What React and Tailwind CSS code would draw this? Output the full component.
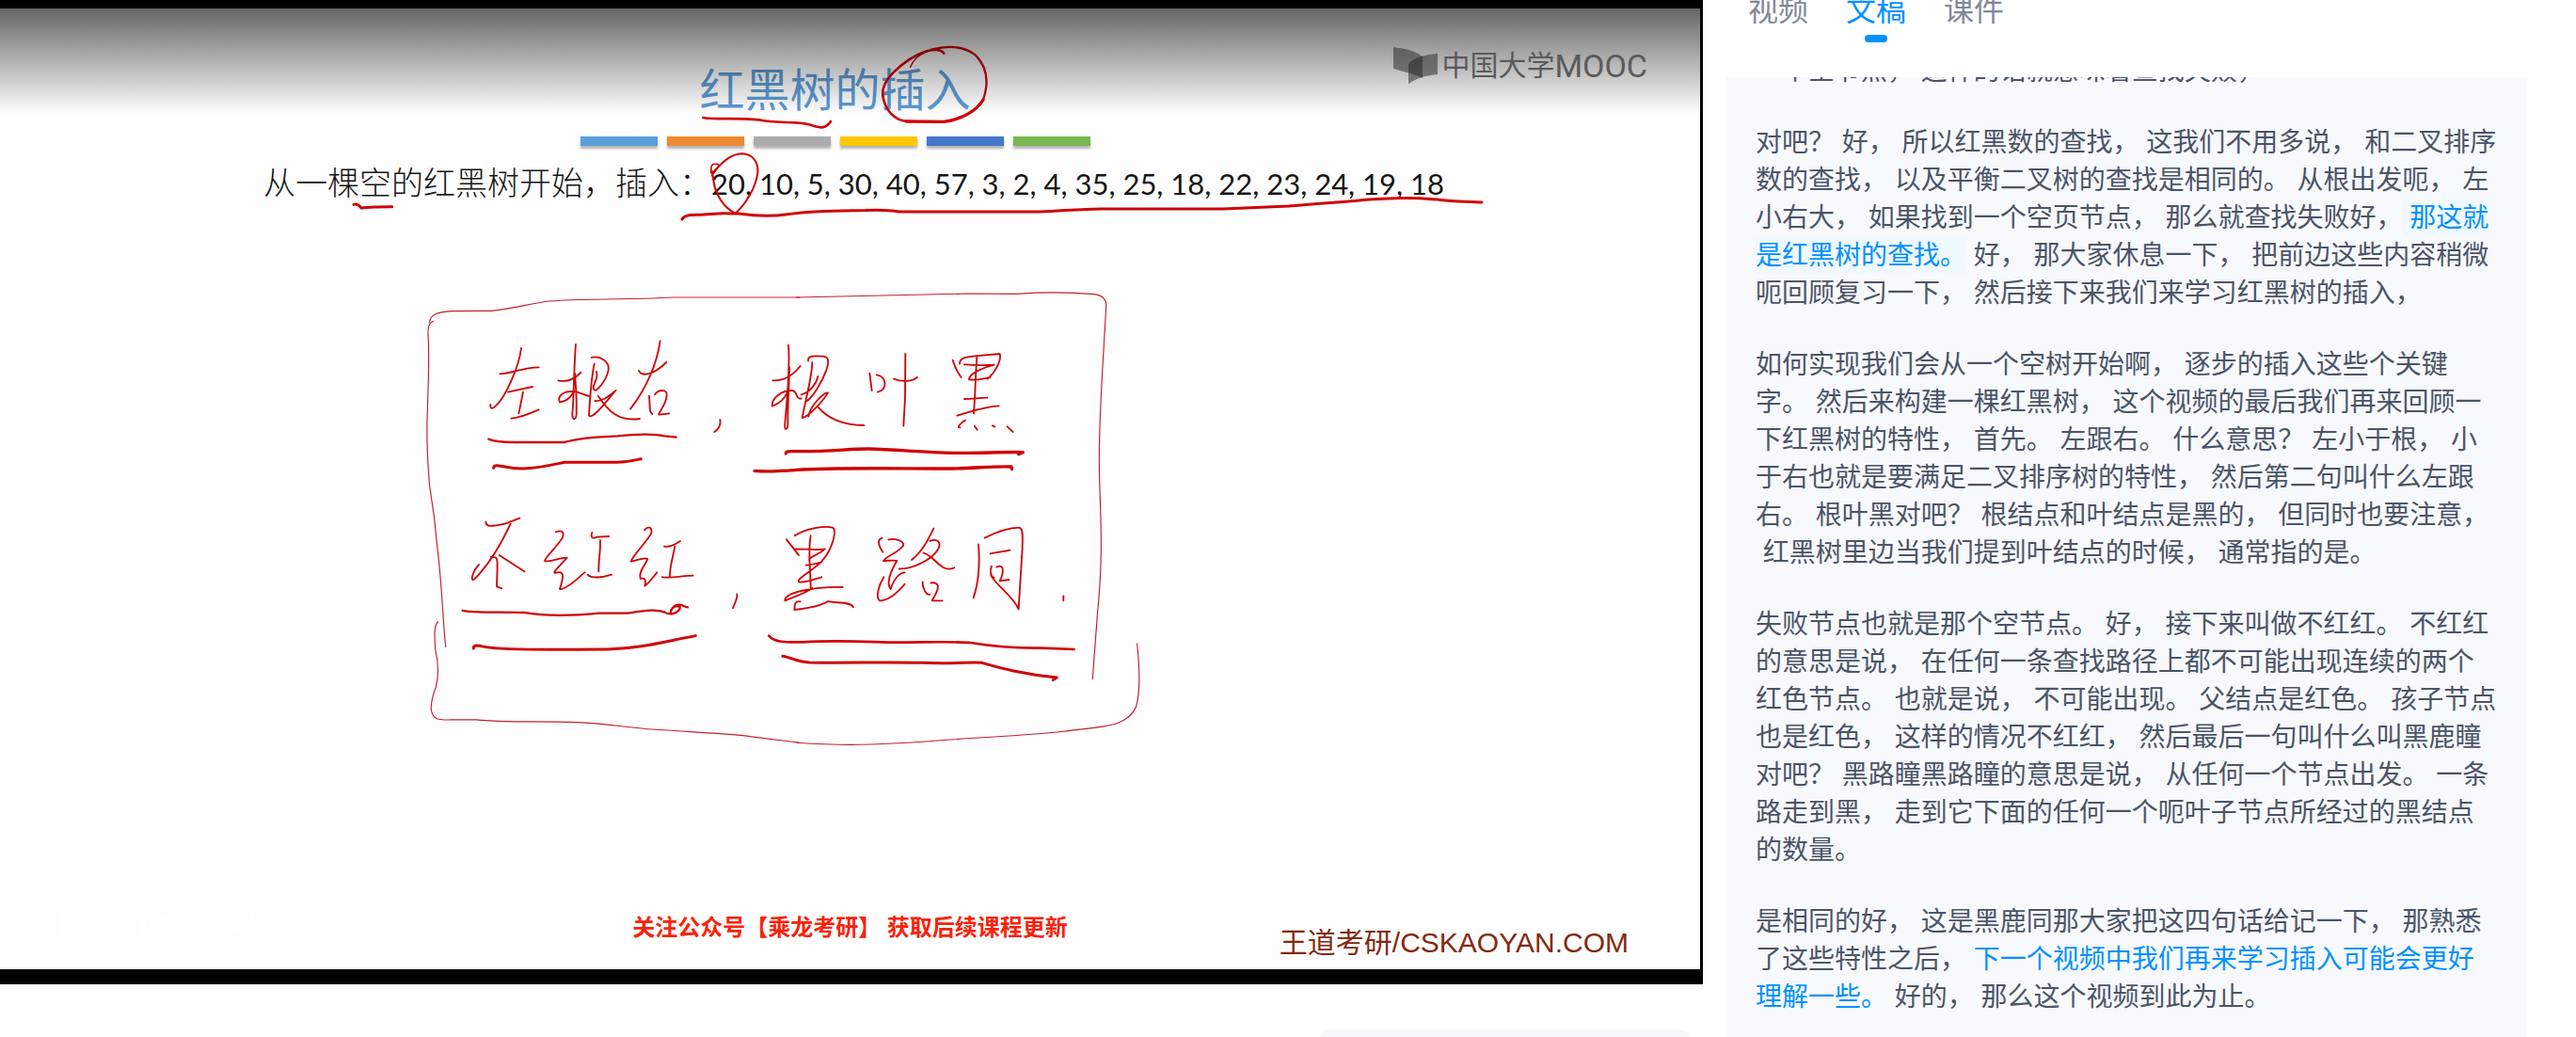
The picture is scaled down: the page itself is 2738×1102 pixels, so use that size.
import React from "react";

const TABS = ["视频", "文稿", "课件"];

const BARS = [
  "bg-[#5b9fdb]",
  "bg-[#ee8a34]",
  "bg-[#adabae]",
  "bg-[#fec700]",
  "bg-[#4478cb]",
  "bg-[#7ab850]",
];

// kind: "active" = sentence being read, "key" = highlighted key sentence
const PARAGRAPHS = [
  ["一个空节点，", "这样的话就意味着查找失败，"],
  [
    "对吧？",
    "好，",
    "所以红黑数的查找，",
    "这我们不用多说，",
    "和二叉排序数的查找，",
    "以及平衡二叉树的查找是相同的。",
    "从根出发呃，",
    "左小右大，",
    "如果找到一个空页节点，",
    "那么就查找失败好，",
    { kind: "active", text: "那这就是红黑树的查找。" },
    "好，",
    "那大家休息一下，",
    "把前边这些内容稍微呃回顾复习一下，",
    "然后接下来我们来学习红黑树的插入，",
  ],
  [
    "如何实现我们会从一个空树开始啊，",
    "逐步的插入这些个关键字。",
    "然后来构建一棵红黑树，",
    "这个视频的最后我们再来回顾一下红黑树的特性，",
    "首先。",
    "左跟右。",
    "什么意思？",
    "左小于根，",
    "小于右也就是要满足二叉排序树的特性，",
    "然后第二句叫什么左跟右。",
    "根叶黑对吧？",
    "根结点和叶结点是黑的，",
    "但同时也要注意，",
    "红黑树里边当我们提到叶结点的时候，",
    "通常指的是。",
  ],
  [
    "失败节点也就是那个空节点。",
    "好，",
    "接下来叫做不红红。",
    "不红红的意思是说，",
    "在任何一条查找路径上都不可能出现连续的两个红色节点。",
    "也就是说，",
    "不可能出现。",
    "父结点是红色。",
    "孩子节点也是红色，",
    "这样的情况不红红，",
    "然后最后一句叫什么叫黑鹿瞳对吧？",
    "黑路瞳黑路瞳的意思是说，",
    "从任何一个节点出发。",
    "一条路走到黑，",
    "走到它下面的任何一个呃叶子节点所经过的黑结点的数量。",
  ],
  [
    "是相同的好，",
    "这是黑鹿同那大家把这四句话给记一下，",
    "那熟悉了这些特性之后，",
    { kind: "key", text: "下一个视频中我们再来学习插入可能会更好理解一些。" },
    "好的，",
    "那么这个视频到此为止。",
  ],
];

function Sentence({ item, first }) {
  const lead = first ? "" : "\u00a0";
  if (typeof item === "string") {
    return (
      <>
        <wbr />
        {lead + item}
      </>
    );
  }
  return (
    <>
      <wbr />
      <span className={item.kind === "active" ? "bg-[#f0f9ff] py-1 text-[#0091ff]" : "text-[#0091ff]"}>
        {lead + item.text}
      </span>
    </>
  );
}

function Transcript() {
  return (
    <article className="min-h-0 flex-1 overflow-hidden bg-[#f8f9fd] px-8">
      <div className="-mt-[26px] flex flex-col gap-9 text-[28px] leading-10 text-[#4a5568]">
        {PARAGRAPHS.map((sentences, i) => (
          <p key={i}>
            {sentences.map((item, j) => (
              <Sentence key={j} item={item} first={j === 0} />
            ))}
          </p>
        ))}
      </div>
    </article>
  );
}

function Tabs() {
  return (
    <nav className="-mt-[13px] flex h-[95px] shrink-0 items-start gap-10 px-6">
      {TABS.map((name) => {
        const active = name === "文稿";
        return (
          <button
            key={name}
            type="button"
            className={
              active
                ? "flex flex-col items-center gap-0.5 text-[32px] leading-[48px] text-[#0091ff]"
                : "flex flex-col items-center gap-0.5 text-[32px] leading-[48px] text-[#7f899b]"
            }
          >
            {name}
            {active && <span className="h-2 w-6 rounded-full bg-[#0091ff]" />}
          </button>
        );
      })}
    </nav>
  );
}

function Watermark() {
  return (
    <div className="absolute top-[39px] right-[56px] flex items-center text-[#5a5a5a]">
      <svg viewBox="0 0 150 132" className="mr-0.5 h-11 w-[50px]" aria-hidden="true">
        <g transform="translate(-36 -60)" fill="#1f1f1f">
          <path opacity=".5" d="M39 67C70 70 105 75 132 97L132 165C105 150 70 145 39 134Z" />
          <path opacity=".5" d="M87 120C100 100 140 90 180 87L180 153C150 155 110 165 87 184Z" />
        </g>
      </svg>
      <span className="text-[30px] leading-[44px]">中国大学</span>
      <span className="font-[Roboto] text-[34px] leading-[44px]">MOOC</span>
    </div>
  );
}

// Pen strokes are drawn on a canvas three times finer than the slide.
function Ink() {
  return (
    <svg
      viewBox="0 0 1807 1021"
      className="pointer-events-none absolute inset-0 h-full w-full"
      fill="none"
      stroke="#d00408"
      strokeLinecap="round"
      strokeLinejoin="round"
      aria-hidden="true"
    >
      <g transform="translate(0 -9)">
        {/* list underline */}
        <path strokeWidth="3" d="M725 233C728 227 738 229 748 228C765 226 775 227 785 227C800 229 820 230 835 228C870 223 900 224 920 223.500C930 223 945 223 956 225L1017 225L1106 225C1130 224 1150 222 1170 222L1300 222C1325 221 1345 220 1370 219C1400 217 1420 215 1440 213.500C1460 211 1475 211 1490 210.500C1520 210 1530 213 1550 214L1575 215" />
        <g transform="translate(270 160) scale(.3333)" strokeWidth="9">
          <path d="M318 172C328 168 334 172 342 183C355 183 365 180 385 180L440 179" />
        </g>
        <g transform="translate(730 30) scale(.3333)" strokeWidth="8">
          <path d="M52 285C80 292 160 285 230 292C280 305 350 295 390 307C430 322 445 318 459 297" />
          <path strokeWidth="4" d="M775 72C740 80 720 105 713 124" />
          <path d="M820 80C810 66 790 66 765 73C730 85 690 110 660 140C630 170 620 200 627 225C635 260 660 295 705 297" />
          <path strokeWidth="10" d="M700 297L820 298C880 290 925 262 945 228" />
          <path strokeWidth="7" d="M945 228C965 170 955 120 920 85C880 55 830 55 780 68" />
          <path strokeWidth="5" d="M78 462C75 435 80 430 100 434C108 440 85 460 80 470" />
          <path strokeWidth="6" d="M82 462C110 430 140 400 175 400C215 402 228 430 226 460C220 510 185 565 155 590C120 575 90 530 85 485L80 455" />
        </g>

        <g transform="translate(430 290) scale(.3333)">
          {/* frame, left side */}
          <g strokeWidth="3.500" stroke="#c2202c">
            <path d="M92 154C78 160 74 170 75 200C80 260 76 330 73 440C68 540 75 620 80 680C90 740 100 820 105 880C120 1000 120 1080 131 1192" />
            <path d="M80 158C80 135 100 125 150 122L275 121C340 115 400 98 460 90C560 82 700 86 860 78L1260 78" />
            <path d="M106 1112C92 1130 96 1160 98 1200C110 1250 108 1290 100 1320C85 1360 80 1385 88 1405C95 1425 115 1426 150 1425L230 1425C350 1435 420 1428 550 1433C650 1436 700 1450 800 1456C950 1466 1050 1470 1100 1478L1260 1498" />
          </g>
          <g strokeWidth="5.500">
            <path d="M372 240C365 300 320 400 290 425C280 435 272 434 274 420M304 322C340 322 380 300 428 301M330 380L408 363M378 380C372 410 368 430 364 448M340 464C370 462 400 448 428 436" />
            <path d="M546 228C540 300 540 400 535 450C535 475 550 470 548 440C550 400 545 350 543 320M490 343C520 350 545 335 562 318M495 412C486 395 505 378 530 378C560 375 575 395 590 392M495 412C520 410 535 390 540 375" />
            <path d="M596 270C625 262 655 285 650 310C645 340 610 385 605 372M605 290C595 340 590 420 588 455C600 470 650 400 674 375C650 395 630 410 607 408M612 315C620 340 600 350 602 370M617 392C650 440 680 475 750 465" />
            <path d="M815 217C805 290 770 370 720 434M747 312C760 335 800 320 835 285M780 392L783 440L790 450M798 388C810 370 840 370 836 392C835 420 805 450 812 452L844 448" />
            <path d="M1006 468C1010 485 1000 500 988 507" />
            <path d="M259 794C260 812 280 808 320 800L367 782M338 800C310 860 270 930 222 977C208 985 218 950 237 930M275 905C300 905 295 915 296 940L294 1000L310 1006M302 900L382 952" />
            <path d="M482 826C500 820 512 824 503 845C485 875 450 905 447 918C460 925 490 908 518 908C500 930 470 955 480 957C515 945 505 975 495 1008C520 1010 560 965 575 955M598 828C592 845 600 848 615 842L652 840M624 852C625 890 618 920 619 952M584 962C595 975 630 972 660 962" />
            <path d="M765 820C775 808 790 808 787 830C770 860 725 905 722 920C740 918 765 905 775 912C770 930 745 950 752 975C765 972 772 975 766 998C780 990 800 960 805 955M828 872C845 875 865 865 879 855M862 872C855 910 845 940 846 968M822 970C850 975 890 965 920 965" />
            <path d="M1060 1024C1062 1040 1052 1055 1047 1069" />
          </g>
          <g strokeWidth="7">
            <path d="M268 530C290 540 320 540 350 540L510 540C560 525 620 522 680 520C740 514 800 514 830 520L866 524" />
            <path d="M185 1077C220 1085 300 1080 380 1083C450 1095 550 1092 620 1085L710 1085C760 1078 800 1070 830 1082C850 1095 880 1080 878 1065C860 1055 845 1075 850 1088M860 1062C880 1050 890 1065 903 1066" />
          </g>
          <g strokeWidth="9">
            <path d="M284 622C285 610 300 615 320 618C380 632 430 620 510 604C600 602 660 606 700 602C730 600 740 595 754 593" />
            <path d="M220 1197C220 1182 240 1190 260 1193C320 1205 500 1200 650 1200C750 1198 830 1175 928 1157" />
          </g>
        </g>

        <g transform="translate(780 290) scale(.3333)">
          {/* frame, right side */}
          <g strokeWidth="3.500" stroke="#c2202c">
            <path d="M200 78C350 74 600 70 750 66L900 67C1000 60 1080 62 1150 68C1180 72 1190 90 1187 110C1180 250 1160 500 1166 650C1170 800 1178 900 1160 1080L1144 1295" />
            <path d="M200 1498C350 1508 450 1505 600 1495C750 1482 950 1475 1050 1462C1180 1445 1250 1450 1282 1385C1300 1330 1292 1240 1286 1182" />
          </g>
          <g strokeWidth="5.500">
            <path d="M174 230C180 300 170 400 163 480C160 510 175 500 172 470C172 400 178 330 177 300M124 343C160 345 190 325 212 297M122 425C120 400 150 375 185 375C205 375 195 405 215 400M122 425C150 415 165 395 172 378" />
            <path d="M237 280C235 262 260 265 285 266C305 268 303 285 295 310C280 350 250 400 230 410M250 285C250 330 225 420 218 462C240 460 290 400 300 382C285 380 240 430 238 458M215 388C245 380 265 350 268 330M268 427C300 465 350 485 415 486" />
            <path d="M433 320L440 375M455 325C490 330 490 375 458 380M547 258L546 400L541 488M510 338C540 350 570 345 585 333" />
            <path d="M698 278C705 300 715 320 725 333M720 290C720 270 740 268 770 265L848 258C855 280 830 320 810 338M735 292C770 295 800 295 830 293C800 300 750 320 750 340C780 345 800 335 818 333M775 270C770 330 770 390 765 448M735 402C760 402 780 398 808 398M712 455C750 445 800 425 845 424M738 470C720 480 710 495 722 493M768 488L776 500M825 487L832 490M872 490L890 507" />
            <path d="M168 850C180 865 195 885 207 900M194 838C230 815 290 805 315 812C330 820 315 880 280 920C250 950 200 975 207 985C230 990 260 975 280 970M195 880C230 880 270 885 290 880C270 900 240 905 240 915M245 838C235 890 245 950 245 1005M230 932C250 930 270 925 280 922M163 1045C160 1020 250 1000 347 1002M163 1045C200 1030 230 1020 250 1005M212 1048C190 1045 195 1065 193 1074C230 1070 280 1060 300 1047C320 1055 370 1045 381 1066" />
            <path d="M473 845C455 850 462 870 475 890M493 850C515 845 545 855 540 870C520 895 490 900 477 918C490 918 510 915 520 918C500 950 485 990 500 1008C510 975 530 955 545 955M478 970C460 1000 452 1035 465 1045C500 1045 530 1010 545 992M637 815C620 850 600 890 567 915M625 855C650 845 662 860 652 880C630 920 560 945 527 943M605 893C640 900 660 960 703 940M602 985C600 1005 615 1030 625 1025M628 988C665 985 650 1015 632 1045L665 1045" />
            <path d="M780 865C785 930 780 990 764 1036M800 845C840 825 880 812 910 812C925 815 920 850 920 880L908 1072C890 1030 840 1000 820 965M818 895C840 888 860 890 880 884M822 935C815 950 820 970 830 972M838 938C865 925 860 960 848 982L878 978" />
            <path d="M1051 1030L1051 1045" />
          </g>
          <g strokeWidth="10">
            <path d="M166 576C165 565 185 570 210 569C300 570 380 560 430 561C520 563 600 572 700 574C780 576 850 570 922 572L908 578" />
            <path d="M66 631C100 634 150 632 200 628C300 620 500 624 700 624C780 622 830 616 885 618L887 626" />
            <path strokeWidth="8" d="M112 1157C130 1178 160 1178 220 1177C350 1170 450 1178 520 1178C620 1178 700 1174 760 1180C850 1195 920 1197 980 1196L1085 1200" />
            <path strokeWidth="9" d="M156 1222C180 1225 200 1240 240 1242C350 1244 500 1240 600 1243C700 1247 760 1240 790 1243C850 1260 920 1280 1030 1290L1018 1298" />
          </g>
        </g>
      </g>
    </svg>
  );
}

function ControlButton({ label, d }) {
  return (
    <button type="button" aria-label={label}>
      <svg viewBox="0 0 32 36" className="h-9 w-8" fill="#ffffff" aria-hidden="true">
        <path d={d} />
      </svg>
    </button>
  );
}

function Player() {
  return (
    <section className="relative flex aspect-[1810/1046] shrink-0 flex-col border-t-[9px] border-r-[3px] border-b-[16px] border-black bg-[#fefefe]">
      <div className="flex flex-col items-center gap-5 pt-[60px] pr-8">
        <h1 className="text-5xl leading-[56px] text-[#5b9bd5]">红黑树的插入</h1>
        <div className="flex gap-[10px]">
          {BARS.map((color) => (
            <span key={color} className={`h-[10px] w-[82px] shadow-[0_3px_3px_rgba(0,0,0,0.3)] ${color}`} />
          ))}
        </div>
      </div>
      <p className="mt-5 flex items-center pl-[280px] whitespace-nowrap text-[#161616]">
        <span className="text-[34px] leading-10 font-light">从一棵空的红黑树开始，插入：</span>
        <span className="font-[Lato] text-[31px] leading-10">
          20, 10, 5, 30, 40, 57, 3, 2, 4, 35, 25, 18, 22, 23, 24, 19, 18
        </span>
      </p>

      <footer className="mt-auto grid grid-cols-[1fr_auto_1fr] items-end pb-2">
        <div className="flex gap-14 pb-5 pl-[62px]">
          <ControlButton label="播放" d="M2 3Q2 0 5 2L29 16Q31 18 29 20L5 34Q2 36 2 33Z" />
          <ControlButton label="上一个" d="M0 4H5V32H0ZM31 4V32L9 18Z" />
          <ControlButton label="下一个" d="M27 4H32V32H27ZM1 4V32L23 18Z" />
        </div>
        <p className="pb-5 text-2xl leading-8 font-bold text-[#f92208]">
          关注公众号【乘龙考研】 获取后续课程更新
        </p>
        <p className="justify-self-end pr-[76px] text-[30px] leading-10 text-[#832a10]">王道考研/CSKAOYAN.COM</p>
      </footer>

      <Ink />
      <div className="pointer-events-none absolute inset-x-0 top-0 h-28 bg-linear-to-b from-black/60 to-black/0" />
      <Watermark />
    </section>
  );
}

export default function App() {
  return (
    <div className="flex h-screen overflow-hidden bg-white font-['Liberation_Sans','Noto_Sans_CJK_SC',sans-serif]">
      <main className="flex min-w-0 flex-1 flex-col gap-12">
        <Player />
        <div className="mr-[10px] h-24 w-[400px] shrink-0 self-end rounded-2xl bg-[#f7f8f9]" />
      </main>
      <aside className="mr-[52px] ml-6 flex w-[852px] shrink-0 flex-col">
        <Tabs />
        <Transcript />
      </aside>
    </div>
  );
}
